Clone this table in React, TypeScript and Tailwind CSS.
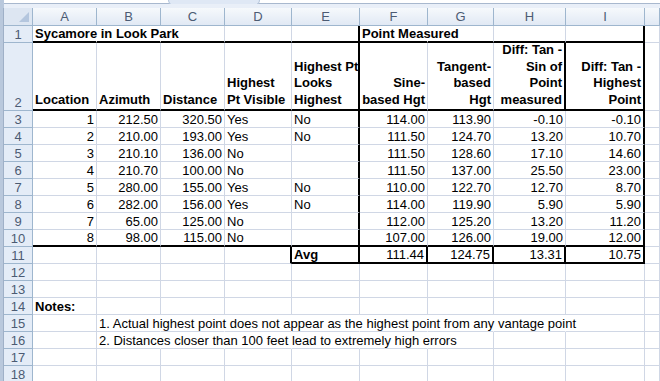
import React from "react";

type Cell = {
  t?: string | string[];
  b?: boolean;
  a?: "l" | "r";
  ov?: boolean;
  tr?: boolean;
  tb?: boolean;
  hr?: boolean;
};

const COLS = ["A", "B", "C", "D", "E", "F", "G", "H", "I", "J"];

const data: [string, string, string, string, string, string, string, string, string][] = [
  ["1", "212.50", "320.50", "Yes", "No", "114.00", "113.90", "-0.10", "-0.10"],
  ["2", "210.00", "193.00", "Yes", "No", "111.50", "124.70", "13.20", "10.70"],
  ["3", "210.10", "136.00", "No", "", "111.50", "128.60", "17.10", "14.60"],
  ["4", "210.70", "100.00", "No", "", "111.50", "137.00", "25.50", "23.00"],
  ["5", "280.00", "155.00", "Yes", "No", "110.00", "122.70", "12.70", "8.70"],
  ["6", "282.00", "156.00", "Yes", "No", "114.00", "119.90", "5.90", "5.90"],
  ["7", "65.00", "125.00", "No", "", "112.00", "125.20", "13.20", "11.20"],
  ["8", "98.00", "115.00", "No", "", "107.00", "126.00", "19.00", "12.00"],
];

function buildRows(): Cell[][] {
  const rows: Cell[][] = [];
  const empty = () => COLS.map(() => ({} as Cell));
  const r1 = empty();
  r1[0] = { t: "Sycamore in Look Park", b: true, ov: true, hr: true, tb: true };
  r1[1] = { hr: true, tb: true };
  r1[2] = { tb: true };
  r1[3] = { tb: true };
  r1[4] = { tb: true, tr: true };
  r1[5] = { t: "Point Measured", b: true, ov: true, hr: true, tb: true };
  r1[6] = { tb: true };
  r1[7] = { tb: true };
  r1[8] = { tb: true, tr: true };
  rows.push(r1);
  const r2 = empty();
  r2[0] = { t: ["Location"], b: true, tb: true };
  r2[1] = { t: ["Azimuth"], b: true, tb: true };
  r2[2] = { t: ["Distance"], b: true, tb: true };
  r2[3] = { t: ["Highest", "Pt Visible"], b: true, tb: true };
  r2[4] = { t: ["Highest Pt", "Looks", "Highest"], b: true, tb: true, tr: true };
  r2[5] = { t: ["Sine-", "based Hgt"], b: true, a: "r", tb: true };
  r2[6] = { t: ["Tangent-", "based", "Hgt"], b: true, a: "r", tb: true };
  r2[7] = { t: ["Diff: Tan -", "Sin of", "Point", "measured"], b: true, a: "r", tb: true, tr: true };
  r2[8] = { t: ["Diff: Tan -", "Highest", "Point"], b: true, a: "r", tb: true, tr: true };
  rows.push(r2);
  data.forEach((d, i) => {
    const r = empty();
    const last = i === data.length - 1;
    d.forEach((v, c) => {
      const isText = c === 3 || c === 4;
      r[c] = { t: v, a: isText ? "l" : "r", tb: last, tr: c === 4 || c === 8 };
    });
    rows.push(r);
  });
  const r11 = empty();
  r11[3] = { tr: true };
  r11[4] = { t: "Avg", b: true, tr: true, tb: true };
  r11[5] = { t: "111.44", a: "r", tr: true, tb: true };
  r11[6] = { t: "124.75", a: "r", tr: true, tb: true };
  r11[7] = { t: "13.31", a: "r", tr: true, tb: true };
  r11[8] = { t: "10.75", a: "r", tr: true, tb: true };
  rows.push(r11);
  rows.push(empty());
  rows.push(empty());
  const r14 = empty();
  r14[0] = { t: "Notes:", b: true };
  rows.push(r14);
  const r15 = empty();
  r15[1] = {
    t: "1. Actual highest point does not appear as the highest point from any vantage point",
    ov: true,
    hr: true,
  };
  for (let c = 2; c <= 7; c++) r15[c] = { hr: true };
  rows.push(r15);
  const r16 = empty();
  r16[1] = { t: "2. Distances closer than 100 feet lead to extremely high errors", ov: true, hr: true };
  for (let c = 2; c <= 5; c++) r16[c] = { hr: true };
  rows.push(r16);
  rows.push(empty());
  rows.push(empty());
  return rows;
}

function CellView({ cell, multi }: { cell: Cell; multi: boolean }) {
  const right = cell.tr
    ? "border-r-2 border-r-black"
    : cell.hr
    ? "border-r border-r-transparent"
    : "border-r border-r-[#d0d7e5]";
  const bottom = cell.tb ? "border-b-2 border-b-black" : "border-b border-b-[#d0d7e5]";
  const weight = cell.b ? "font-bold" : "font-normal";
  const align = cell.a === "r" ? "items-end text-right" : "items-start text-left";
  const ov = cell.ov ? "overflow-visible whitespace-nowrap z-10" : "overflow-hidden whitespace-nowrap";
  let content: React.ReactNode = null;
  if (Array.isArray(cell.t)) {
    content = cell.t.map((l, i) => (
      <span key={i} className="block leading-[16.8px]">
        {l}
      </span>
    ));
  } else if (cell.t) {
    content = <span className="block leading-[14px]">{cell.t}</span>;
  }
  return (
    <div
      className={`relative flex flex-col justify-end px-[2px] text-[13px] text-black ${right} ${bottom} ${weight} ${align} ${ov} ${
        multi ? "pb-0" : "pb-0"
      }`}
    >
      {content}
    </div>
  );
}

export default function App() {
  const rows = buildRows();
  return (
    <div className="w-[660px] h-[381px] overflow-hidden bg-white font-['Liberation_Sans',Arial,sans-serif]">
      <div className="h-[8px] flex">
        <div className="w-[4px] bg-[#b9c8dc]" />
        <div className="flex-1 flex flex-col">
          <div className="h-[4px] bg-white border-b border-b-[#a8b8ce] flex">
            <div className="ml-[164px] w-[92px] h-[6px] rounded-b-[8px] bg-[#dfe8f5] border border-t-0 border-[#b5c5db]" />
          </div>
          <div className="flex-1 bg-[#e9eff8]" />
        </div>
      </div>
      <div className="flex">
        <div className="w-[4px] bg-[#b9c8dc] border-r border-r-[#9fb0c7]" />
        <div className="grid flex-1 grid-cols-[29px_64px_64px_64px_67px_68px_68px_66px_72px_79px_1fr] grid-rows-[18px_17px_68px_repeat(16,17px)]">
          <div className="relative bg-[#dde6f2] border-r border-b border-[#9eb6ce]">
            <div className="absolute right-[3px] bottom-[3px] w-0 h-0 border-l-[10px] border-l-transparent border-b-[10px] border-b-[#b4c6de]" />
          </div>
          {COLS.map((c) => (
            <div
              key={c}
              className="flex items-center justify-center pt-[1px] bg-linear-to-b from-[#f6f9fc] to-[#e1e9f4] border-r border-b border-[#9eb6ce] text-[13px] text-[#4c5b73]"
            >
              {c === "J" ? "" : c}
            </div>
          ))}
          {rows.map((r, ri) => (
            <React.Fragment key={ri}>
              <div className="flex items-end justify-center bg-[#e4ecf7] border-r border-b border-[#9eb6ce] text-[13px] leading-[14px] text-[#4c5b73]">
                {ri + 1}
              </div>
              {r.map((cell, ci) => (
                <CellView key={ci} cell={cell} multi={ri === 1} />
              ))}
            </React.Fragment>
          ))}
        </div>
      </div>
    </div>
  );
}
